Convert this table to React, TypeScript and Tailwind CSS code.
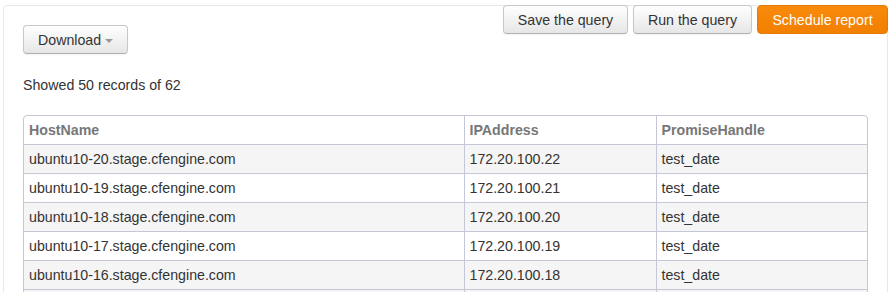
import React from "react";

const rows = [
  ["ubuntu10-20.stage.cfengine.com", "172.20.100.22", "test_date"],
  ["ubuntu10-19.stage.cfengine.com", "172.20.100.21", "test_date"],
  ["ubuntu10-18.stage.cfengine.com", "172.20.100.20", "test_date"],
  ["ubuntu10-17.stage.cfengine.com", "172.20.100.19", "test_date"],
  ["ubuntu10-16.stage.cfengine.com", "172.20.100.18", "test_date"],
];

const grayBtn =
  "h-[29px] whitespace-nowrap rounded-[4px] border border-[#c8c8c8] border-b-[#b0b0b0] bg-gradient-to-b from-[#ffffff] to-[#e6e6e6] px-0 text-center text-[14.2px] leading-[20px] text-[#333] shadow-[inset_0_1px_0_rgba(255,255,255,0.2),0_1px_2px_rgba(0,0,0,0.05)]";

export default function App() {
  return (
    <div
      className="h-[292px] w-[893px] overflow-hidden bg-white pt-[5px] pl-[3px] pr-[5px]"
      style={{ fontFamily: '"Liberation Sans", Arial, sans-serif' }}
    >
      <div className="relative h-[400px] rounded-[4px] border border-[#e8e8e8] px-[19px] pt-[19px]">
        <div className="absolute right-[-1px] top-[-1px] flex gap-[5px]">
          <button className={`${grayBtn} w-[125px]`}>Save the query</button>
          <button className={`${grayBtn} w-[119px]`}>Run the query</button>
          <button className="h-[29px] w-[131px] whitespace-nowrap rounded-[4px] border border-[#e57a00] bg-gradient-to-b from-[#f88a0c] to-[#f27f00] px-0 text-center text-[14.2px] leading-[20px] text-white">
            Schedule report
          </button>
        </div>

        <button className={`${grayBtn} flex w-[105px] items-center pl-[14px]`}>
          <span>Download</span>
          <span className="ml-[4px] mt-[2px] h-0 w-0 border-x-[4px] border-t-[4px] border-x-transparent border-t-[#9a9a9a]" />
        </button>

        <div className="mt-[21px] text-[14.2px] leading-[20px] text-[#333]">
          Showed 50 records of 62
        </div>

        <div className="mt-[20px] w-[845px] overflow-hidden rounded-t-[4px] border border-[#c4c7d7]">
          <table className="w-full border-collapse text-[14.2px] leading-[20px]">
            <colgroup>
              <col className="w-[440px]" />
              <col className="w-[192px]" />
              <col />
            </colgroup>
            <thead>
              <tr>
                <th className="h-[28px] px-[5px] py-[4px] text-left font-bold text-[#777]">HostName</th>
                <th className="h-[28px] border-l border-[#c4c7d7] px-[5px] py-[4px] text-left font-bold text-[#777]">IPAddress</th>
                <th className="h-[28px] border-l border-[#c4c7d7] px-[5px] py-[4px] text-left font-bold text-[#777]">PromiseHandle</th>
              </tr>
            </thead>
            <tbody>
              {rows.map((r, i) => (
                <tr key={i} className={i % 2 === 0 ? "bg-[#f5f5f5]" : "bg-white"}>
                  <td className="h-[29px] border-t border-[#c4c7d7] px-[5px] py-[4px] text-[#333]">{r[0]}</td>
                  <td className="h-[29px] border-t border-l border-[#c4c7d7] px-[5px] py-[4px] text-[#333]">{r[1]}</td>
                  <td className="h-[29px] border-t border-l border-[#c4c7d7] px-[5px] py-[4px] text-[#333]">{r[2]}</td>
                </tr>
              ))}
              <tr className="bg-[#f5f5f5]">
                <td className="h-[29px] border-t border-[#c4c7d7]" />
                <td className="h-[29px] border-t border-l border-[#c4c7d7]" />
                <td className="h-[29px] border-t border-l border-[#c4c7d7]" />
              </tr>
            </tbody>
          </table>
        </div>
      </div>
    </div>
  );
}
